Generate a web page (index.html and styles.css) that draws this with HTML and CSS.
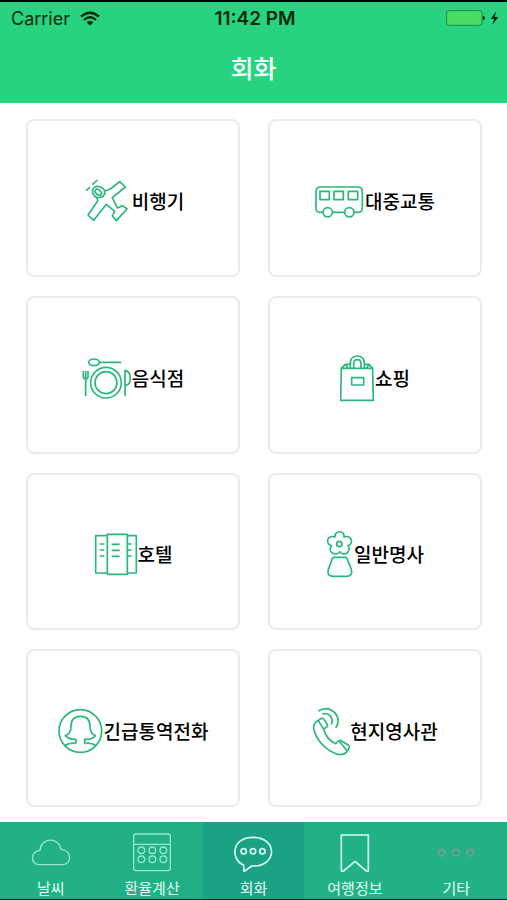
FILE: index.html
```html
<!DOCTYPE html>
<html lang="ko">
<head>
    <meta charset="UTF-8">
    <meta name="viewport" content="width=device-width, initial-scale=1.0">
    <title>회화</title>
    <link rel="stylesheet" href="styles.css">
</head>
<body>
    <!-- Header -->
    <header class="header">
        <div class="status-bar">
            <div class="status-left">
                <span>Carrier</span>
                <svg width="20" height="15" viewBox="0 0 60 45" fill="none" stroke="#06290f" stroke-width="7">
                    <path d="M3 17Q30 -7 57 17"/>
                    <path d="M12 27Q30 11 48 27"/>
                    <path d="M20 34Q30 25 40 34L30 44Z" fill="#06290f" stroke="none"/>
                </svg>
            </div>
            <span class="status-time">11:42 PM</span>
            <div class="status-right">
                <svg width="53" height="16" viewBox="0 0 159 48">
                    <rect x="2" y="2" width="106" height="44" rx="7" fill="#4cdb62" stroke="#178a46" stroke-width="3"/>
                    <path d="M110 17q7 1 7 7t-7 7z" fill="#06290f"/>
                    <path d="M151 4L134 27h10l-5 18 18-24h-11z" fill="#06290f"/>
                </svg>
            </div>
        </div>
        <h1>회화</h1>
    </header>

    <!-- Category Cards -->
    <main class="card-grid">
        <button class="card" type="button">
            <svg class="card-icon" width="50" height="48" viewBox="21 36 150 144">
                <path d="M90 78L106 72L134 50L151 66L112 98L127 129L143 122L156 132L124 167L112 153L119 139L94 118L56 166L39 150L68 108L66 98"/>
                <path d="M66 98C52 92 48 75 58 67C68 60 84 66 90 78C92 89 83 99 66 98Z"/>
                <ellipse cx="70" cy="82" rx="11" ry="7" transform="rotate(40 70 82)"/>
                <path d="M33 77L45 67M52 59L67 45"/>
            </svg>
            <span>비행기</span>
        </button>
        <button class="card" type="button">
            <svg class="card-icon" width="50" height="34" viewBox="45 57 150 102">
                <path d="M68 142H60Q48 142 48 130V80Q48 66 62 66H173Q187 66 187 80V130Q187 142 175 142H163M98 142H133"/>
                <path d="M60 79H88V104H60ZM102 79H130V104H102ZM145 79H173V104H145Z"/>
                <circle cx="83" cy="142" r="14"/>
                <circle cx="148" cy="142" r="14"/>
            </svg>
            <span>대중교통</span>
        </button>
        <button class="card" type="button">
            <svg class="card-icon" width="50" height="42" viewBox="33 36 150 126">
                <circle cx="105" cy="113" r="46"/>
                <circle cx="105" cy="113" r="33"/>
                <ellipse cx="69" cy="52" rx="16" ry="10"/>
                <path d="M85 52H151M44 78V153M37 78V95Q37 101 44 101Q51 101 51 95V78M162 153V76Q178 80 178 99Q178 120 162 122"/>
            </svg>
            <span>음식점</span>
        </button>
        <button class="card" type="button">
            <svg class="card-icon" width="35" height="48" viewBox="60 27 105 144">
                <path d="M64 70H158L160 166H62ZM64 70L76 58H91M133 58H147L158 70M76 58L84 69M147 58L140 69"/>
                <path d="M91 69V54Q92 33 112 33Q132 33 133 54V69M101 69V55Q102 44 112 44Q122 44 123 55V69"/>
                <rect x="95" y="98" width="36" height="22"/>
            </svg>
            <span>쇼핑</span>
        </button>
        <button class="card" type="button">
            <svg class="card-icon" width="44" height="43" viewBox="30 42 132 129">
                <path d="M70 50H35V162H70M130 50H157V162H130M70 46H130V166H70Z"/>
                <path d="M47 75H61M47 93H61M47 111H61M83 76H107M83 94H107M83 112H107M130 75H143M130 93H143M130 111H143"/>
            </svg>
            <span>호텔</span>
        </button>
        <button class="card" type="button">
            <svg class="card-icon" width="28" height="48" viewBox="48 33 84 144">
                <path d="M75 54C72 33 105 33 102 54C123 46 134 72 114 80C126 98 102 115 89 98C76 115 52 98 64 80C43 72 54 46 75 54Z"/>
                <circle cx="88" cy="75" r="8"/>
                <path d="M71 115H107Q110 115 111 119L124 151Q129 172 110 172H69Q49 172 55 151L67 119Q68 115 71 115Z"/>
            </svg>
            <span>일반명사</span>
        </button>
        <button class="card" type="button">
            <svg class="card-icon" width="46" height="46" viewBox="36 42 138 138">
                <circle cx="103" cy="111" r="64"/>
                <path d="M56 155Q69 146 90 147V136Q70 138 58 125Q75 120 75 97C75 78 84 67 103 67C122 67 132 78 132 97Q132 120 148 125Q137 138 116 136V147Q137 146 151 155"/>
            </svg>
            <span>긴급통역전화</span>
        </button>
        <button class="card" type="button">
            <svg class="card-icon" width="38" height="50" viewBox="33 36 114 150">
                <path d="M52 79L62 73Q66 72 69 76L79 92Q81 96 77 99L68 105C72 122 84 140 104 149L113 141Q117 138 120 140L143 154Q147 157 145 161C136 183 120 185 102 178C70 165 45 135 38 105Q36 87 52 79Z"/>
                <path d="M52 80L67 104M114 141L137 169"/>
                <path d="M64 61Q77 54 89 67Q97 78 91 91M52 51Q78 34 101 56Q120 77 104 102"/>
            </svg>
            <span>현지영사관</span>
        </button>
    </main>

    <!-- Tab Bar -->
    <nav class="tab-bar">
        <a class="tab" href="#weather">
            <svg class="tab-icon" width="40" height="40" viewBox="91 93 120 120">
                <path d="M116 191C88 191 88 150 118 148C121 108 176 108 181 145C215 148 214 191 186 191Z"/>
            </svg>
            <span>날씨</span>
        </a>
        <a class="tab" href="#exchange">
            <svg class="tab-icon" width="40" height="40" viewBox="397 93 120 120">
                <rect x="402" y="99" width="110" height="110" rx="8"/>
                <path d="M402 130H512"/>
                <circle cx="425" cy="148" r="10"/>
                <circle cx="458" cy="148" r="10"/>
                <circle cx="491" cy="148" r="10"/>
                <circle cx="425" cy="175" r="10"/>
                <circle cx="458" cy="175" r="10"/>
                <circle cx="491" cy="175" r="10"/>
            </svg>
            <span>환율계산</span>
        </a>
        <a class="tab active" href="#talk">
            <svg class="tab-icon" width="40" height="40" viewBox="0 0 120 120">
                <path d="M29 98C-6 82 -6 16 60 16C134 16 134 102 60 102H56L33 119L32 99Z"/>
                <circle cx="32" cy="58" r="8"/>
                <circle cx="60" cy="58" r="8"/>
                <circle cx="88" cy="58" r="8"/>
            </svg>
            <span>회화</span>
        </a>
        <a class="tab" href="#travel">
            <svg class="tab-icon tab-icon-bright" width="40" height="40" viewBox="245 93 120 120">
                <path d="M264 102H345V206Q345 214 339 210L305 181L271 210Q264 214 264 206Z"/>
            </svg>
            <span>여행정보</span>
        </a>
        <a class="tab" href="#more">
            <svg class="tab-icon tab-icon-gray" width="40" height="40" viewBox="545 93 120 120">
                <circle cx="562" cy="155" r="10"/>
                <circle cx="605" cy="155" r="10"/>
                <circle cx="648" cy="155" r="10"/>
            </svg>
            <span>기타</span>
        </a>
    </nav>
</body>
</html>
```
FILE: styles.css
```css
/* General Page Styling */
* {
    box-sizing: border-box;
}

body {
    font-family: 'Noto Sans CJK KR', sans-serif;
    background-color: #ffffff;
    margin: 0;
    min-height: 100vh;
    display: flex;
    flex-direction: column;
}

svg {
    display: block;
    flex-shrink: 0;
}

/* Header */
.header {
    background-color: #27d37e;
    border-top: 2px solid #000000;
    padding-bottom: 16px;
}

.status-bar {
    display: grid;
    grid-template-columns: 1fr auto 1fr;
    align-items: center;
    height: 32px;
    padding: 0 8px 0 11px;
    font-family: 'Inter', sans-serif;
    font-size: 18px;
    color: #06290f;
}

.status-left {
    display: flex;
    align-items: center;
    gap: 10px;
}

.status-time {
    font-size: 19px;
    font-weight: 600;
}

.status-right {
    display: flex;
    justify-content: flex-end;
}

.header h1 {
    margin: 0;
    padding-top: 14px;
    text-align: center;
    font-size: 25px;
    line-height: 39px;
    font-weight: 500;
    color: #ffffff;
}

/* Category Cards */
.card-grid {
    flex: 1;
    display: grid;
    grid-template-columns: 1fr 1fr;
    grid-auto-rows: 1fr;
    gap: 19px 28px;
    padding: 16px 25px 15px 26px;
}

.card {
    display: flex;
    align-items: center;
    justify-content: center;
    min-height: 80px;
    padding: 6px 0 0;
    background-color: #ffffff;
    border: 2px solid #ebebeb;
    border-radius: 8px;
    font-family: inherit;
    font-size: 19px;
    font-weight: 500;
    line-height: 28px;
    color: #000000;
    cursor: pointer;
}

.card-icon {
    fill: none;
    stroke: #2bb67c;
    stroke-width: 5;
    stroke-linejoin: round;
}

/* Tab Bar */
.tab-bar {
    display: grid;
    grid-template-columns: repeat(5, 1fr);
    background-color: #22b186;
    border-bottom: 1px solid #06291e;
}

.tab {
    display: flex;
    flex-direction: column;
    align-items: center;
    gap: 5px;
    padding-top: 10px;
    font-size: 15px;
    line-height: 22px;
    color: #e3fff5;
    text-decoration: none;
}

.tab.active {
    background-color: #1ba184;
}

.tab-icon {
    fill: none;
    stroke: #95e8cb;
    stroke-width: 4;
    stroke-linejoin: round;
}

.active .tab-icon,
.tab-icon-bright {
    stroke: #d3fff1;
    stroke-width: 5;
}

.tab-icon-gray {
    stroke: #7f9c8e;
    stroke-width: 5;
}
```
